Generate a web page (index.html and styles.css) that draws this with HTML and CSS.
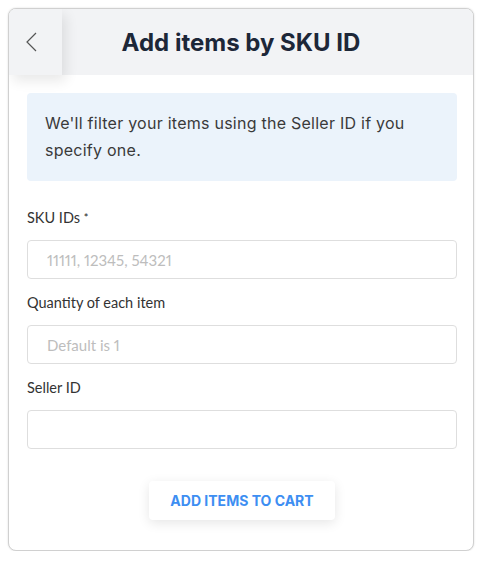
FILE: index.html
```html
<!DOCTYPE html>
<html>
<head>
<meta charset="utf-8">
<link rel="stylesheet" href="styles.css">
</head>
<body>
<div class="card">
  <div class="header">
    <button class="back" aria-label="Back">
      <svg width="14" height="20" viewBox="0 0 14 20"><path d="M11 1 L2 10 L11 19" fill="none" stroke="#555" stroke-width="1.2"/></svg>
    </button>
    <h1 class="title">Add items by SKU ID</h1>
  </div>
  <div class="content">
    <div class="info">We'll filter your items using the Seller ID if you specify one.</div>
    <div class="field first">
      <label class="label">SKU IDs <span class="req">*</span></label>
      <input class="input" placeholder="11111, 12345, 54321">
    </div>
    <div class="field">
      <label class="label">Quantity of each item</label>
      <input class="input" placeholder="Default is 1">
    </div>
    <div class="field">
      <label class="label">Seller ID</label>
      <input class="input">
    </div>
    <div class="actions">
      <button class="submit">ADD ITEMS TO CART</button>
    </div>
  </div>
</div>
</body>
</html>
```
FILE: styles.css
```css
html, body { margin: 0; padding: 0; background: #fff; }
body { font-family: Inter, "Noto Sans", sans-serif; }
.card {
  margin: 8px 0 0 8px;
  width: 464px;
  height: 541px;
  border: 1px solid #d0d0d0;
  border-radius: 8px;
  box-shadow: 0 0 2px rgba(0,0,0,0.15);
  overflow: hidden;
  background: #fff;
}
.header {
  position: relative;
  height: 66px;
  background: #f2f3f5;
  display: flex;
  align-items: center;
  justify-content: center;
}
.back {
  position: absolute;
  left: 0; top: 0;
  width: 53px; height: 66px;
  border: 0;
  background: #f2f3f5;
  box-shadow: 4px 6px 12px rgba(0,0,0,0.09);
  display: flex; align-items: center; justify-content: center;
  padding: 0 8px 0 0;
}
.title {
  margin: 0;
  font-size: 24px;
  font-weight: 700;
  color: #1d2738;
  letter-spacing: 0;
}
.content { padding: 18px 16px 0 18px; }
.info {
  background: #ebf3fb;
  border-radius: 4px;
  padding: 17px 18px;
  font-size: 16px;
  line-height: 27px;
  letter-spacing: 0.25px;
  color: #3a3a3a;
}
.field { display: flex; flex-direction: column; margin-top: 16px; }
.field.first { margin-top: 29px; }
.label {
  font-family: Lato, sans-serif;
  font-size: 14.5px;
  line-height: 16px;
  color: #333;
  margin-bottom: 14px;
}
.req { font-size: 11px; vertical-align: top; color: #222; }
.input {
  height: 39px;
  box-sizing: border-box;
  border: 1px solid #dedede;
  border-radius: 4px;
  padding: 0 19px;
  font-family: Lato, sans-serif;
  font-size: 15px;
  font-variant-numeric: proportional-nums;
  color: #333;
  outline: none;
}
.input::placeholder { color: #bdbdbd; }
.actions { display: flex; justify-content: center; margin-top: 32px; }
.submit {
  width: 186px;
  height: 39px;
  border: 0;
  border-radius: 4px;
  background: #fff;
  box-shadow: 0 3px 12px rgba(0,0,0,0.10);
  color: #3d8ef2;
  font-family: Inter, sans-serif;
  font-weight: 700;
  font-size: 14px;
  letter-spacing: 0;
}
```
